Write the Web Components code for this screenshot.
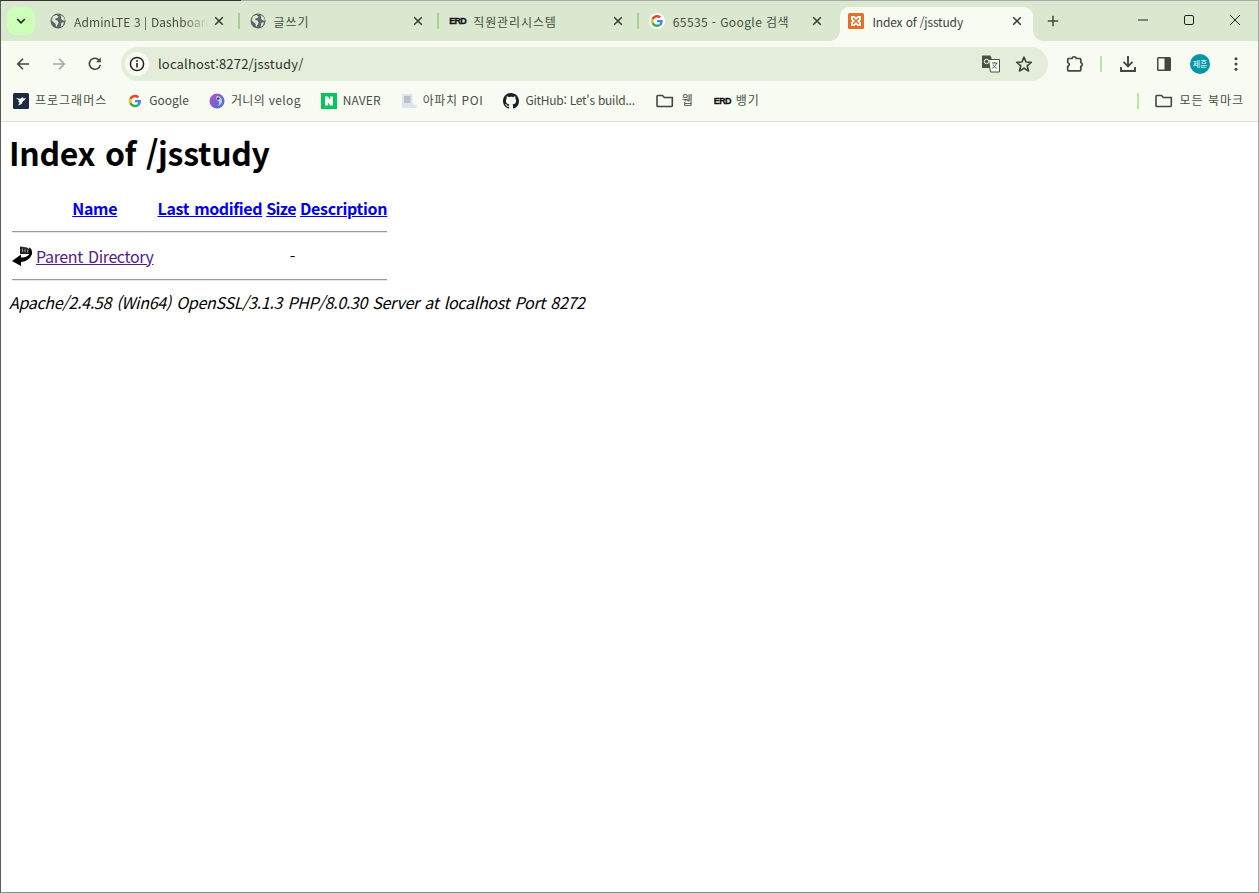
<!DOCTYPE html>
<html lang="ko">
<head>
<meta charset="utf-8">
<title>Index of /jsstudy</title>
<style>
  html, body { margin:0; height:100%; background:#fff; }
</style>
</head>
<body>

<browser-window>
  <tab-strip slot="tabs">
    <chrome-tab icon="globe" fade style="letter-spacing:.1px">AdminLTE 3 | Dashboard</chrome-tab>
    <chrome-tab icon="globe" style="letter-spacing:.9px">글쓰기</chrome-tab>
    <chrome-tab icon="erd" style="letter-spacing:.9px">직원관리시스템</chrome-tab>
    <chrome-tab icon="google-tab" nosep style="letter-spacing:.4px">65535 - Google 검색</chrome-tab>
    <chrome-tab icon="xampp" active nosep style="letter-spacing:-.15px">Index of /jsstudy</chrome-tab>
  </tab-strip>
  <tool-bar slot="toolbar" url="localhost:8272/jsstudy/"></tool-bar>
  <bookmark-bar slot="bookmarks">
    <bookmark-item icon="programmers" style="letter-spacing:1px">프로그래머스</bookmark-item>
    <bookmark-item icon="google">Google</bookmark-item>
    <bookmark-item icon="velog" style="letter-spacing:.35px">거니의 velog</bookmark-item>
    <bookmark-item icon="naver" style="letter-spacing:.1px">NAVER</bookmark-item>
    <bookmark-item icon="doc" style="letter-spacing:.6px">아파치 POI</bookmark-item>
    <bookmark-item icon="github" style="letter-spacing:-.25px">GitHub: Let's build...</bookmark-item>
    <bookmark-item icon="folder" style="letter-spacing:1px;gap:8px;margin-left:1px">웹</bookmark-item>
    <bookmark-item icon="erd" style="letter-spacing:1px">뱅기</bookmark-item>
    <bookmark-item slot="end" icon="folder" style="letter-spacing:1px">모든 북마크</bookmark-item>
  </bookmark-bar>
  <dir-listing slot="page" path="/jsstudy"></dir-listing>
</browser-window>

<script>
const UI_FONT = `"Noto Sans CJK KR", "Open Sans", sans-serif`;
const INK = "#3f4a3a";

const G_PATHS = `<path fill="#EA4335" d="M24 9.5c3.54 0 6.71 1.22 9.21 3.6l6.85-6.85C35.9 2.38 30.47 0 24 0 14.62 0 6.51 5.38 2.56 13.22l7.98 6.19C12.43 13.72 17.74 9.5 24 9.5z"/><path fill="#4285F4" d="M46.98 24.55c0-1.57-.15-3.09-.38-4.55H24v9.02h12.94c-.58 2.96-2.26 5.48-4.78 7.18l7.73 6c4.51-4.18 7.09-10.36 7.09-17.65z"/><path fill="#FBBC05" d="M10.53 28.59c-.48-1.45-.76-2.99-.76-4.59s.27-3.14.76-4.59l-7.98-6.19C.92 16.46 0 20.12 0 24c0 3.88.92 7.54 2.56 10.78l7.97-6.19z"/><path fill="#34A853" d="M24 48c6.48 0 11.93-2.13 15.89-5.81l-7.73-6c-2.15 1.45-4.92 2.3-8.16 2.3-6.26 0-11.57-4.22-13.47-9.91l-7.98 6.19C6.51 42.62 14.62 48 24 48z"/>`;

const ICONS = {
  globe: `<svg viewBox="0 0 16 16" width="16" height="16"><circle cx="8" cy="8" r="7.500" fill="#5f6368"/><path d="M3 3.200 6.400 2 8.600 3.200 7.600 5 5.600 5.400 5.200 7 7.600 7.600 8.600 9.400 7.600 12 6.200 14 5.600 11 3.400 9 1.600 7.200Z M10.600 1.800 14 4.400 15 7.400 12.800 7.600 11.200 6 11 3.600Z M11.400 9.600 14.200 9.400 12.400 13 10.600 14Z" fill="#d9e8cf"/></svg>`,
  erd: `<span class="erd">ERD</span>`,
  google: `<svg viewBox="-7 -7 62 62" width="16" height="16">${G_PATHS}</svg>`,
  "google-tab": `<svg viewBox="-8 -8 64 64" width="16" height="16"><circle cx="24" cy="24" r="32" fill="#fff"/>${G_PATHS}</svg>`,
  xampp: `<svg viewBox="0 0 16 16" width="16" height="16"><rect width="16" height="16" rx="1.500" fill="#e4702a"/><path d="M3 3h3.400L8 4.600 9.600 3H13v3.400L11.600 8 13 9.600V13H9.600L8 11.400 6.400 13H3V9.600L4.400 8 3 6.400Z M4.800 4.800v1L7 8 4.800 10.200v1h1L8 9l2.200 2.200h1v-1L9 8l2.200-2.200v-1h-1L8 7 5.800 4.800Z" fill="#fff" fill-rule="evenodd"/></svg>`,
  programmers: `<svg viewBox="0 0 16 16" width="16" height="16"><rect width="16" height="16" rx="1.500" fill="#1e2a3f"/><path d="M3 5 7.200 5.800 9.800 4 10.400 5.600 13 5 11.200 7.600 10 8 8.600 11 5 12.600 6.800 9.800 4.800 8.400 6.600 8Z" fill="#fff"/></svg>`,
  velog: `<svg viewBox="0 0 16 16" width="16" height="16"><defs><linearGradient id="v" x1="0" y1="0" x2="1" y2="1"><stop offset="0" stop-color="#c04fc4"/><stop offset="1" stop-color="#3f6fd8"/></linearGradient></defs><circle cx="8" cy="8" r="7.500" fill="url(#v)"/><path d="M8 3a5 5 0 0 1 0 10 3.400 3.400 0 0 0 1.600-5A3 3 0 0 1 8 3Z" fill="#bcd4f4"/><circle cx="9.200" cy="5.600" r="1.200" fill="#1f2d6b"/></svg>`,
  naver: `<svg viewBox="0 0 16 16" width="16" height="16"><rect width="16" height="16" fill="#03c75a"/><path d="M4 3.500h3l2.200 3.600V3.500H12v9H9L6.800 8.900v3.600H4Z" fill="#fff"/></svg>`,
  doc: `<svg viewBox="0 0 16 16" width="16" height="16"><path d="M1 1h10.500v9.500l4 1.500v3H1Z" fill="#dfe4ea"/><path d="M3 3h6.500v7H3Z" fill="#b9c2cc"/></svg>`,
  github: `<svg viewBox="0 0 16 16" width="16" height="16"><path fill="#1b1f23" d="M8 0C3.580 0 0 3.580 0 8c0 3.540 2.290 6.530 5.470 7.590.4.07.55-.17.55-.38 0-.19-.01-.82-.01-1.490-2.010.37-2.530-.49-2.690-.94-.09-.23-.48-.94-.82-1.130-.28-.15-.68-.52-.01-.53.63-.01 1.080.58 1.230.82.72 1.210 1.870.87 2.330.66.07-.52.28-.87.51-1.070-1.780-.2-3.640-.89-3.640-3.950 0-.87.31-1.590.82-2.150-.08-.2-.36-1.020.08-2.120 0 0 .67-.21 2.200.82.64-.18 1.320-.27 2-.27.68 0 1.360.09 2 .27 1.530-1.040 2.200-.82 2.200-.82.44 1.100.16 1.920.08 2.120.51.56.82 1.270.82 2.150 0 3.070-1.870 3.750-3.650 3.950.29.25.54.73.54 1.480 0 1.070-.01 1.930-.01 2.200 0 .21.15.46.55.38A8.013 8.013 0 0016 8c0-4.420-3.580-8-8-8z"/></svg>`,
  folder: `<svg viewBox="0 0 18 16" width="18" height="16"><path d="M1.800 2.500h4.700l1.800 2h8v8.200a.8.8 0 0 1-.8.8H1.800a.8.8 0 0 1-.8-.8V3.300a.8.8 0 0 1 .8-.8Z" fill="none" stroke="${INK}" stroke-width="1.600"/></svg>`
};

class SiteIcon extends HTMLElement {
  connectedCallback(){
    if(this.shadowRoot) return;
    this.attachShadow({ mode:"open" });
    this.shadowRoot.innerHTML = `
      <style>
        :host{ display:inline-flex; flex:none; align-items:center; justify-content:center; letter-spacing:0; }
        svg{ display:block; }
        .erd{ font:900 9px/16px "Liberation Sans", sans-serif; letter-spacing:-.7px; color:#111; width:16px; text-align:center; -webkit-text-stroke:.3px #111; }
      </style>
      ${ICONS[this.getAttribute("name")] || ""}
    `;
  }
}

class BrowserWindow extends HTMLElement {
  constructor(){
    super();
    this.attachShadow({ mode:"open" });
    this.shadowRoot.innerHTML = `
      <style>
        :host{
          display:flex;
          flex-direction:column;
          box-sizing:border-box;
          height:893px;
          border-left:1px solid #5b5b5b;
          border-right:1px solid #a8a8a8;
          border-bottom:1px solid #8a8a8a;
          background:#fff;
        }
        .page{ flex:1; min-height:0; }
      </style>
      <slot name="tabs"></slot>
      <slot name="toolbar"></slot>
      <slot name="bookmarks"></slot>
      <div class="page"><slot name="page"></slot></div>
    `;
  }
}

class TabStrip extends HTMLElement {
  constructor(){
    super();
    this.attachShadow({ mode:"open" });
    this.shadowRoot.innerHTML = `
      <style>
        :host{
          display:flex;
          height:41px;
          box-sizing:border-box;
          background:#d9e8cf;
          border-top:1px solid #a9a9a9;
          position:relative;
        }
        :host::before{
          content:"";
          position:absolute; left:-1px; top:-1px;
          width:241px; height:1px;
          background:#333;
        }
        .drop{
          flex:none;
          width:28px; height:28px;
          margin:6px 3px 0 6px;
          border-radius:9px;
          background:#ccffb8;
          display:grid; place-items:center;
        }
        .tabs{ display:flex; flex:none; }
        .plus{
          flex:none;
          width:28px; height:28px;
          margin:6px 0 0 3px;
          display:grid; place-items:center;
        }
        .spring{ flex:1; }
        .win{
          flex:none;
          width:46px; height:40px;
          display:grid; place-items:center;
          margin-top:-1px;
        }
      </style>
      <div class="drop">
        <svg width="12" height="12" viewBox="0 0 12 12"><path d="M2.200 4 6 7.800 9.800 4" fill="none" stroke="#1c2a16" stroke-width="1.700"/></svg>
      </div>
      <div class="tabs"><slot></slot></div>
      <div class="plus">
        <svg width="12" height="12" viewBox="0 0 12 12"><path d="M6 .8v10.400M.8 6h10.400" stroke="${INK}" stroke-width="1.500"/></svg>
      </div>
      <div class="spring"></div>
      <div class="win"><svg width="12" height="12" viewBox="0 0 12 12"><path d="M1 6h10" stroke="#222" stroke-width="1"/></svg></div>
      <div class="win"><svg width="12" height="12" viewBox="0 0 12 12"><rect x="1.500" y="1.500" width="9" height="9" rx="1.500" fill="none" stroke="#222" stroke-width="1"/></svg></div>
      <div class="win"><svg width="12" height="12" viewBox="0 0 12 12"><path d="M1 1l10 10M11 1 1 11" stroke="#222" stroke-width="1"/></svg></div>
    `;
  }
}

class ChromeTab extends HTMLElement {
  constructor(){
    super();
    this.attachShadow({ mode:"open" });
    this.shadowRoot.innerHTML = `
      <style>
        :host{
          display:flex;
          align-items:center;
          position:relative;
          box-sizing:border-box;
          width:199.6px;
          height:34px;
          margin-top:6px;
          padding:0 11px 6px 12px;
          font:12px/16px ${UI_FONT};
          color:#474f45;
        }
        :host(:not([nosep]))::after{
          content:"";
          position:absolute; right:-2px; top:6px;
          width:2px; height:16px;
          background:#a5d08f;
        }
        :host([active]){ color:#3c3f3b; }
        .bg{
          display:none;
          position:absolute;
          left:4px; right:3px; top:0; bottom:0;
          background:#f7fbf2;
          border-radius:9px 9px 0 0;
        }
        :host([active]) .bg{ display:block; }
        .bg::before, .bg::after{
          content:"";
          position:absolute; bottom:0;
          width:10px; height:10px;
        }
        .bg::before{ left:-10px; background:radial-gradient(circle at 0 0, transparent 9.500px, #f7fbf2 10px); }
        .bg::after{ right:-10px; background:radial-gradient(circle at 100% 0, transparent 9.500px, #f7fbf2 10px); }
        site-icon{ position:relative; }
        .title{
          position:relative;
          flex:1;
          min-width:0;
          margin:1px 0 0 8px;
          white-space:nowrap;
          overflow:hidden;
          height:16px;
        }
        :host([fade]) .title{
          -webkit-mask-image:linear-gradient(to right, #000 80%, transparent 100%);
        }
        .close{ position:relative; flex:none; width:16px; height:16px; display:grid; place-items:center; margin-left:2px; }
      </style>
      <div class="bg"></div>
      <site-icon name="${this.getAttribute("icon")}"></site-icon>
      <div class="title"><slot></slot></div>
      <div class="close">
        <svg width="10" height="10" viewBox="0 0 10 10"><path d="M1.200 1.200l7.600 7.600M8.800 1.200 1.200 8.800" stroke="#333b30" stroke-width="1.500"/></svg>
      </div>
    `;
  }
}

class ToolBar extends HTMLElement {
  constructor(){
    super();
    this.attachShadow({ mode:"open" });
    this.shadowRoot.innerHTML = `
      <style>
        :host{
          display:flex;
          align-items:flex-start;
          box-sizing:border-box;
          height:40px;
          padding:6px 4px 0 4px;
          background:#f7fbf2;
          font:13px/34px ${UI_FONT};
          color:#2c3329;
        }
        .btn{ flex:none; width:36px; height:34px; display:grid; place-items:center; }
        .omni{
          flex:1;
          min-width:0;
          height:34px;
          margin:0 9px 0 8px;
          border-radius:17px;
          background:#e3edda;
          display:flex;
          align-items:center;
          padding:0 8px 0 4px;
        }
        .info{ flex:none; width:24px; height:24px; border-radius:50%; background:#f7fbf2; display:grid; place-items:center; }
        .url{ flex:1; margin-left:9px; white-space:nowrap; letter-spacing:.18px; }
        .omni .btn{ width:33px; }
        .sep{ flex:none; width:2px; height:16px; margin:9px 8px 0 7px; background:#b8e8a4; }
        .avatar{
          width:20px; height:20px; border-radius:50%;
          background:#0097a7; color:#fff;
          font:8px/20px ${UI_FONT};
          text-align:center;
        }
      </style>
      <div class="btn"><svg width="16" height="16" viewBox="0 0 16 16"><path d="M14 8H3M8 2.800 2.800 8 8 13.200" fill="none" stroke="${INK}" stroke-width="1.600"/></svg></div>
      <div class="btn"><svg width="16" height="16" viewBox="0 0 16 16"><path d="M2 8h11M8 2.800 13.200 8 8 13.200" fill="none" stroke="#a3aa9f" stroke-width="1.600"/></svg></div>
      <div class="btn"><svg width="16" height="16" viewBox="0 0 16 16"><path d="M13.300 8.800A5.500 5.500 0 1 1 12 4.100" fill="none" stroke="${INK}" stroke-width="1.600"/><path d="M13.800 1.500v4.800H9Z" fill="${INK}"/></svg></div>
      <div class="omni">
        <div class="info"><svg width="16" height="16" viewBox="0 0 16 16"><circle cx="8" cy="8" r="6.600" fill="none" stroke="#222" stroke-width="1.500"/><path d="M8 7v4.500" stroke="#222" stroke-width="1.600"/><circle cx="8" cy="4.900" r="1" fill="#222"/></svg></div>
        <div class="url">${this.getAttribute("url")}</div>
        <div class="btn"><svg width="18" height="18" viewBox="0 0 18 18"><path d="M0 .5h8.500l1.500 4V13H0Z" fill="#4a5246"/><path d="M6.500 4.500h11V17H8.500Z" fill="#f7fbf2" stroke="#4a5246"/><circle cx="4.500" cy="6.500" r="2.200" fill="none" stroke="#fff" stroke-width="1"/><path d="M10 8h5.500M12.500 7v1M14.500 8c-.6 2.600-2.200 4.300-4.200 5.200M11 9.500c.8 1.800 2 3 3.800 3.800" fill="none" stroke="#4a5246" stroke-width=".9"/></svg></div>
        <div class="btn"><svg width="18" height="18" viewBox="0 0 18 18"><path d="M9 2.200 11 7l5.200.4-4 3.400 1.300 5.100L9 13.200l-4.500 2.700 1.300-5.100-4-3.400L7 7Z" fill="none" stroke="${INK}" stroke-width="1.700" stroke-linejoin="round"/></svg></div>
      </div>
      <div class="btn"><svg width="18" height="18" viewBox="0 0 18 18"><path d="M2.500 3.500H6a2.200 2.200 0 0 1 4.300 0H14a.8.8 0 0 1 .8.8v3.300a1.900 1.900 0 0 1 0 3.700V15a.8.8 0 0 1-.8.8H2.500a.8.8 0 0 1-.8-.8v-3.600a2 2 0 0 0 0-3.900V4.300a.8.8 0 0 1 .8-.8Z" fill="none" stroke="${INK}" stroke-width="1.700" stroke-linejoin="round"/></svg></div>
      <div class="sep"></div>
      <div class="btn"><svg width="18" height="18" viewBox="0 0 18 18"><path d="M9 1v10M4.500 6.800 9 11.300 13.500 6.800M2 12v4h14v-4" fill="none" stroke="${INK}" stroke-width="1.900"/></svg></div>
      <div class="btn"><svg width="16" height="16" viewBox="0 0 16 16"><rect x="1" y="1" width="14" height="14" rx="1.500" fill="${INK}"/><rect x="2.500" y="2.500" width="6" height="11" fill="#f7fbf2"/></svg></div>
      <div class="btn"><div class="avatar">제훈</div></div>
      <div class="btn"><svg width="16" height="16" viewBox="0 0 16 16"><circle cx="8" cy="2.800" r="1.500" fill="${INK}"/><circle cx="8" cy="8" r="1.500" fill="${INK}"/><circle cx="8" cy="13.200" r="1.500" fill="${INK}"/></svg></div>
    `;
  }
}

class BookmarkBar extends HTMLElement {
  constructor(){
    super();
    this.attachShadow({ mode:"open" });
    this.shadowRoot.innerHTML = `
      <style>
        :host{
          display:flex;
          align-items:center;
          box-sizing:border-box;
          height:41px;
          padding:0 14px 1px 12px;
          background:#f7fbf2;
          border-bottom:1px solid #dfe1dc;
        }
        .items{ display:flex; align-items:center; gap:20px; flex:1; }
        .sep{ flex:none; width:2px; height:16px; background:#b8e8a4; margin-right:16px; }
      </style>
      <div class="items"><slot></slot></div>
      <div class="sep"></div>
      <slot name="end"></slot>
    `;
  }
}

class BookmarkItem extends HTMLElement {
  constructor(){
    super();
    this.attachShadow({ mode:"open" });
    this.shadowRoot.innerHTML = `
      <style>
        :host{
          display:inline-flex;
          align-items:center;
          gap:6px;
          font:12px/16px ${UI_FONT};
          color:#474f45;
          white-space:nowrap;
        }
        span{ margin-top:-1px; }
      </style>
      <site-icon name="${this.getAttribute("icon")}"></site-icon>
      <span><slot></slot></span>
    `;
  }
}

class DirListing extends HTMLElement {
  constructor(){
    super();
    this.attachShadow({ mode:"open" });
    const path = this.getAttribute("path");
    this.shadowRoot.innerHTML = `
      <style>
        :host{
          display:block;
          padding:0 8px;
          font:16px/21px ${UI_FONT};
          letter-spacing:-.3px;
          word-spacing:1.1px;
          color:#000;
        }
        h1{ margin:13px 0 27px; font-size:32px; line-height:34px; font-weight:700; }
        table{ border-spacing:4px 2px; border-collapse:separate; margin-left:-1px; }
        th, td{ padding:0; vertical-align:middle; }
        th{ height:21px; font-weight:700; text-align:center; }
        td{ padding-top:1px; }
        td.ic{ width:20px; height:22px; padding:1px 0 0; }
        td.sz{ text-align:right; padding:2px 1px 0 0; }
        a{ color:#0000ee; text-decoration:underline; }
        a.seen{ color:#551a8b; letter-spacing:-.37px; }
        a.mod{ letter-spacing:-.38px; }
        a.size{ letter-spacing:-.6px; }
        hr{ margin:8px 0; border:0; border-top:1px solid #9a9a9a; border-bottom:1px solid #e8e8e8; height:0; }
        address{ margin:0; font-style:italic; }
        svg{ display:block; }
      </style>
      <h1>Index of ${path}</h1>
      <table>
        <tr>
          <th></th>
          <th><a href="#">Name</a></th>
          <th><a class="mod" href="#">Last modified</a></th>
          <th><a class="size" href="#">Size</a></th>
          <th><a href="#">Description</a></th>
        </tr>
        <tr><th colspan="5"><hr></th></tr>
        <tr>
          <td class="ic">
            <svg width="20" height="22" viewBox="0 0 20 22">
              <path d="M8 1.500 15 2.500 18 5V9H8Z" fill="#222"/>
              <path d="M10.500 3.500v3.500M13 3.800v3.500M15.500 4.800v2.500" stroke="#aaa" stroke-width=".9"/>
              <path d="M17 2.500C20.500 3.500 20.800 9 19 11 17 15 13 16.500 9 17L9 21 0 16 9 9.500 9 12.500C13 13 17 11 17.500 8Z" fill="#000"/>
            </svg>
          </td>
          <td><a class="seen" href="#">Parent Directory</a></td>
          <td></td>
          <td class="sz">-</td>
          <td></td>
        </tr>
        <tr><th colspan="5"><hr></th></tr>
      </table>
      <address>Apache/2.4.58 (Win64) OpenSSL/3.1.3 PHP/8.0.30 Server at localhost Port 8272</address>
    `;
  }
}

customElements.define("site-icon", SiteIcon);
customElements.define("browser-window", BrowserWindow);
customElements.define("tab-strip", TabStrip);
customElements.define("chrome-tab", ChromeTab);
customElements.define("tool-bar", ToolBar);
customElements.define("bookmark-bar", BookmarkBar);
customElements.define("bookmark-item", BookmarkItem);
customElements.define("dir-listing", DirListing);
</script>
</body>
</html>
